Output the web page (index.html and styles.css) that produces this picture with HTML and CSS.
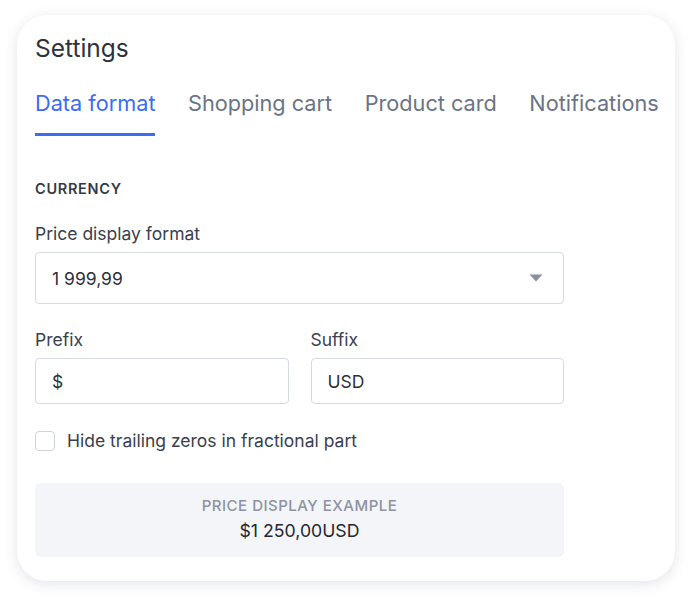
FILE: index.html
```html
<!DOCTYPE html>
<html lang="en">
<head>
<meta charset="utf-8">
<title>Settings</title>
<link rel="stylesheet" href="styles.css">
</head>
<body>
<div class="card">
  <h1 class="title">Settings</h1>
  <nav class="tabs">
    <span class="tab active">Data format</span>
    <span class="tab">Shopping cart</span>
    <span class="tab">Product card</span>
    <span class="tab">Notifications</span>
  </nav>
  <div class="form">
    <div class="section">CURRENCY</div>
    <div class="field">
      <label class="label">Price display format</label>
      <div class="select">
        <span>1 999,99</span>
        <svg class="caret" width="14" height="8" viewBox="0 0 14 8"><path d="M0.5 0.5 H13.5 L7 7.5 Z" fill="#8a8f9c"/></svg>
      </div>
    </div>
    <div class="row">
      <div class="field">
        <label class="label">Prefix</label>
        <div class="input">$</div>
      </div>
      <div class="field">
        <label class="label">Suffix</label>
        <div class="input">USD</div>
      </div>
    </div>
    <label class="check">
      <span class="box"></span>
      <span>Hide trailing zeros in fractional part</span>
    </label>
    <div class="example">
      <div class="example-title">PRICE DISPLAY EXAMPLE</div>
      <div class="example-value">$1 250,00USD</div>
    </div>
  </div>
</div>
</body>
</html>
```

FILE: styles.css
```css
* { box-sizing: border-box; }
html, body { margin: 0; padding: 0; background: #ffffff; }
body {
  font-family: Inter, "Noto Sans", sans-serif;
  color: #2b303b;
  padding: 15px 18px 19px 17px;
}
.card {
  width: 658px;
  height: 566px;
  background: #fff;
  border-radius: 30px;
  box-shadow: 0 3px 14px rgba(40, 50, 80, 0.13);
  padding: 19px 18px 24px 18px;
}
.title {
  margin: 0;
  font-size: 24.5px;
  line-height: 28px;
  font-weight: 400;
  color: #2d323d;
}
.tabs {
  display: flex;
  gap: 32.5px;
  margin-top: 28px;
  white-space: nowrap;
}
.tab {
  flex-shrink: 0;
  font-size: 21.7px;
  line-height: 26px;
  color: #6b7386;
  padding-bottom: 17px;
  border-bottom: 3px solid transparent;
}
.tab.active {
  color: #3b6df2;
  border-bottom-color: #3b6df2;
}
.form {
  width: 529px;
  display: flex;
  flex-direction: column;
}
.section {
  margin-top: 44px;
  font-size: 14.5px;
  line-height: 17px;
  font-weight: 600;
  letter-spacing: 0.7px;
  color: #343a48;
}
.field {
  display: flex;
  flex-direction: column;
  gap: 8px;
  margin-top: 27px;
}
.label {
  font-size: 17.5px;
  line-height: 20px;
  color: #3a404d;
}
.select, .input {
  border: 1px solid #d5d9e1;
  border-radius: 4px;
  padding: 0 16px;
  font-size: 17.5px;
  color: #2b303b;
  display: flex;
  align-items: center;
}
.select {
  height: 52px;
  justify-content: space-between;
  padding-right: 20px;
}
.input { height: 46px; }
.row {
  display: grid;
  grid-template-columns: 1fr 1fr;
  gap: 22px;
}
.row .field { margin-top: 26px; }
.check {
  margin-top: 27px;
  display: flex;
  align-items: center;
  gap: 12px;
  font-size: 17.5px;
  line-height: 20px;
  color: #3a404d;
}
.box {
  width: 20px;
  height: 20px;
  border: 1px solid #cfd3db;
  border-radius: 4px;
  background: #fff;
}
.example {
  margin-top: 32px;
  height: 74px;
  background: #f4f5f8;
  border-radius: 6px;
  display: flex;
  flex-direction: column;
  align-items: center;
  justify-content: center;
  gap: 7px;
  padding-bottom: 2px;
}
.example-title {
  font-size: 15px;
  line-height: 17px;
  font-weight: 500;
  color: #8d93a0;
  letter-spacing: 0.5px;
}
.example-value {
  font-size: 17.7px;
  line-height: 20px;
  color: #23272f;
}
```
